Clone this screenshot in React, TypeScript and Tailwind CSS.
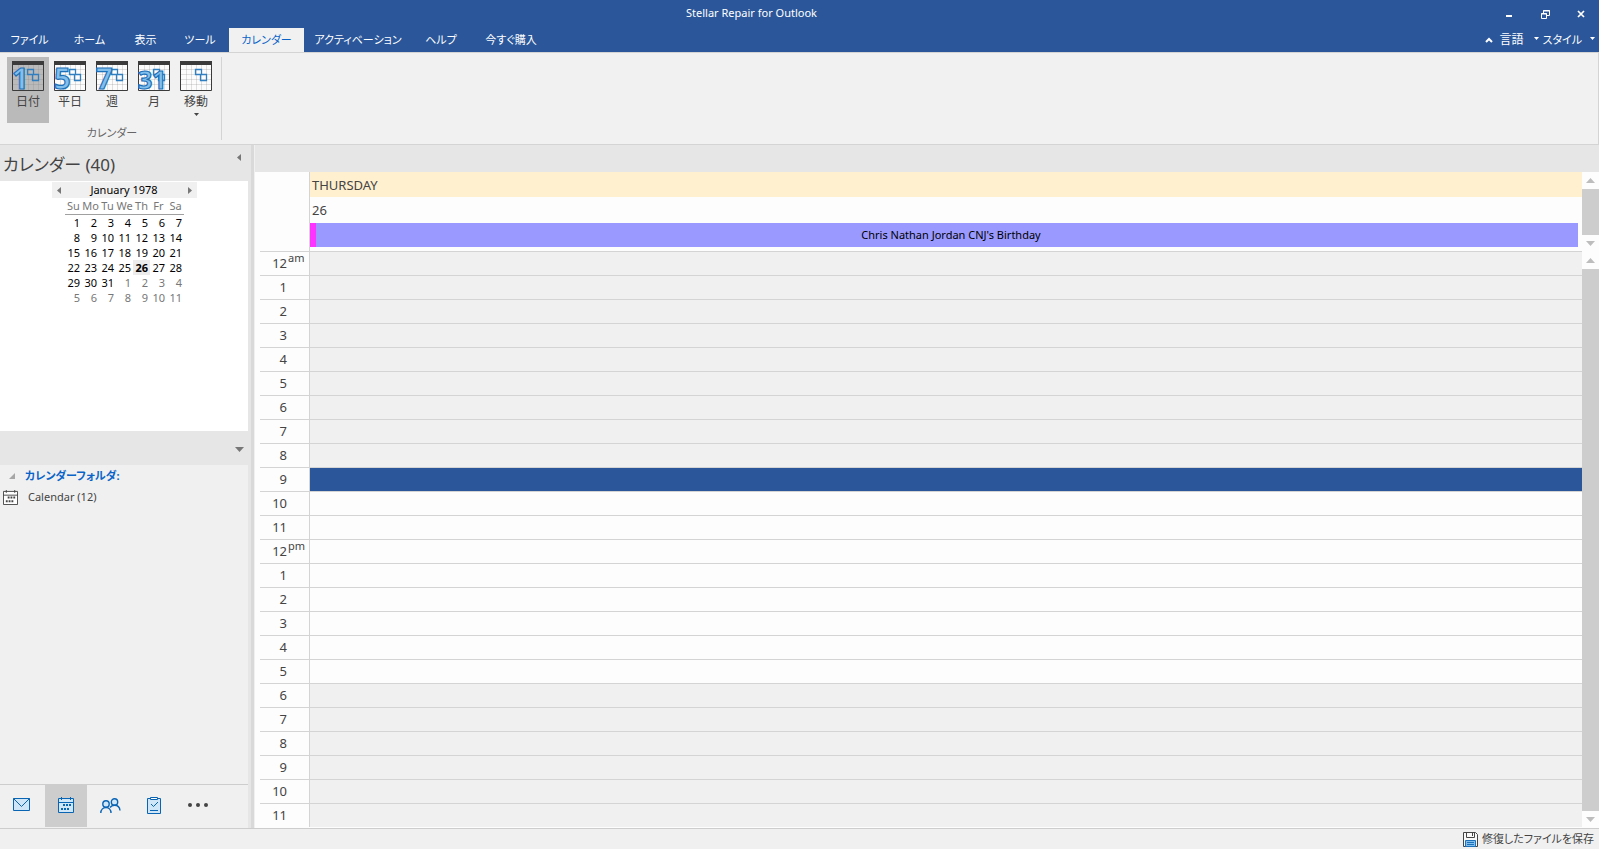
import type { ReactNode } from "react";

const tabs = [
  { label: "ファイル", width: "w-[59px]" },
  { label: "ホーム", width: "w-[61px]" },
  { label: "表示", width: "w-[51px]" },
  { label: "ツール", width: "w-[58px]" },
  { label: "カレンダー", width: "w-[75px]", active: true },
  { label: "アクティベーション", width: "w-[108px]" },
  { label: "ヘルプ", width: "w-[58px]" },
  { label: "今すぐ購入", width: "w-[82px]" },
];

const views = [
  { label: "日付", digits: "1", active: true },
  { label: "平日", digits: "5" },
  { label: "週", digits: "7" },
  { label: "月", digits: "31" },
  { label: "移動", digits: "", menu: true },
];

const weekdays = ["Su", "Mo", "Tu", "We", "Th", "Fr", "Sa"];
const weeks = [
  [1, 2, 3, 4, 5, 6, 7],
  [8, 9, 10, 11, 12, 13, 14],
  [15, 16, 17, 18, 19, 20, 21],
  [22, 23, 24, 25, 26, 27, 28],
  [29, 30, 31, 1, 2, 3, 4],
  [5, 6, 7, 8, 9, 10, 11],
];

const hours = Array.from({ length: 24 }, (_, hour) => ({
  hour,
  label: hour % 12 === 0 ? 12 : hour % 12,
  suffix: hour === 0 ? "am" : hour === 12 ? "pm" : "",
}));

function Triangle({ dir, className }: { dir: "up" | "down" | "left" | "right"; className: string }) {
  const points = {
    up: "0,10 5,0 10,10",
    down: "0,0 10,0 5,10",
    left: "10,0 10,10 0,5",
    right: "0,0 10,5 0,10",
  };
  return (
    <svg viewBox="0 0 10 10" preserveAspectRatio="none" className={className} fill="currentColor" aria-hidden="true">
      <polygon points={points[dir]} />
    </svg>
  );
}

function ViewIcon({ digits }: { digits: string }) {
  return (
    <svg width="32" height="30" viewBox="0 0 32 30" className="shrink-0 overflow-visible" aria-hidden="true">
      <rect x="1" y="4" width="30" height="25" fill="#fff" fillOpacity={digits === "1" ? 0 : 0.8} />
      <path d="M6.5 4v25M11.5 4v25M16.5 4v25M21.5 4v25M26.5 4v25M1 8.5h30M1 13.5h30M1 18.5h30M1 23.5h30" stroke="#888" strokeOpacity="0.25" />
      <path d="M15.5 8.5h6v5h-6zM20.5 13.5h6v6h-6z" fill="none" stroke="#2f7fc1" strokeWidth="1.3" />
      <path d="M.5 0v29.5h31V0" fill="none" stroke="#3b3b3b" />
      <rect width="32" height="4" fill="#3b3b3b" />
      <text
        x="0"
        y="28"
        fontSize={digits === "31" ? 25 : 29}
        fontWeight="700"
        fontFamily="Noto Sans, sans-serif"
        fill="#83bfec"
        stroke="#1d71b8"
        strokeWidth="1.2"
      >
        {digits}
      </text>
    </svg>
  );
}

function CalendarGlyph({ stroke, fill, className }: { stroke: string; fill: string; className: string }) {
  return (
    <svg viewBox="0 0 16 16" className={className} aria-hidden="true">
      <path d="M.5 1.5h15v14H.5z" fill={fill} stroke={stroke} />
      <path d="M.5 5.5h15M3.5 0v3M12.500 0v3" stroke={stroke} />
      <path d="M5 7h2v2H5zM8 7h2v2H8zM11 7h2v2h-2zM3 11h2v2H3zM6 11h2v2H6zM9 11h2v2H9z" fill={stroke} />
    </svg>
  );
}

function TitleBar() {
  return (
    <header className="bg-[#2b579a] text-white">
      <div className="flex h-7 items-center">
        <div className="w-3" />
        <h1 className="flex-1 pb-[2px] text-center text-[11px] leading-6 font-normal">Stellar Repair for Outlook</h1>
        <div className="flex h-6">
          <button type="button" aria-label="Minimize" className="flex w-9 items-center justify-center">
            <svg width="8" height="8"><path d="M1 6h6" stroke="#fff" strokeWidth="2" /></svg>
          </button>
          <button type="button" aria-label="Restore" className="flex w-9 items-center justify-center">
            <svg width="9" height="9" fill="none" stroke="#fff">
              <path d="M2.5 3V.5h6v5H6M2 1h7M0 4h6" />
              <path d="M.5 3.5h5v5h-5z" />
            </svg>
          </button>
          <button type="button" aria-label="Close" className="flex w-9 items-center justify-center">
            <svg width="8" height="8"><path d="M1 1l6 6M7 1L1 7" stroke="#fff" strokeWidth="1.7" /></svg>
          </button>
        </div>
      </div>
      <div className="flex h-6 items-stretch text-[11px]">
        <nav className="flex">
          {tabs.map((tab) => (
            <button
              key={tab.label}
              type="button"
              className={`${tab.width} flex items-center justify-center whitespace-nowrap ${tab.active ? "bg-[#f1f1f1] text-[#0a64c8]" : ""}`}
            >
              {tab.label}
            </button>
          ))}
        </nav>
        <div className="ml-auto flex items-center">
          <button type="button" aria-label="Collapse ribbon" className="px-[6px]">
            <svg width="8" height="6"><path d="M1 5l3-3 3 3" fill="none" stroke="#fff" strokeWidth="2" /></svg>
          </button>
          <button type="button" className="flex items-center text-xs">
            言語 <Triangle dir="down" className="mb-1 ml-[10px] h-[3px] w-[5px]" />
          </button>
          <button type="button" className="ml-1 flex items-center pr-1">
            スタイル <Triangle dir="down" className="mb-1 ml-2 h-[3px] w-[5px]" />
          </button>
        </div>
      </div>
    </header>
  );
}

function Ribbon() {
  return (
    <section className="flex h-[93px] border-y border-r border-[#d4d4d4] bg-[#f1f1f1] py-1 text-xs text-[#444]">
      <div className="flex flex-col border-r border-[#d4d4d4] pr-1 pl-[7px]">
        <div className="flex">
          {views.map((view) => (
            <button
              key={view.label}
              type="button"
              className={`flex h-[66px] w-[42px] flex-col items-center pt-1 ${view.active ? "bg-[#bababa]" : ""}`}
            >
              <ViewIcon digits={view.digits} />
              <span className="mt-[3px] leading-4">{view.label}</span>
              {view.menu && <Triangle dir="down" className="mt-[3px] h-[3px] w-[5px]" />}
            </button>
          ))}
        </div>
        <div className="text-center text-[11px] leading-5 text-[#666]">カレンダー</div>
      </div>
    </section>
  );
}

function MiniCalendar() {
  return (
    <div className="h-[250px] bg-white pt-px">
      <div className="mx-auto flex h-4 w-[145px] items-center justify-between bg-[#f0f0f0] px-[5px] text-[#777]">
        <button type="button" aria-label="Previous month">
          <Triangle dir="left" className="h-[7px] w-1" />
        </button>
        <span className="text-[11px] text-black">January 1978</span>
        <button type="button" aria-label="Next month">
          <Triangle dir="right" className="h-[7px] w-1" />
        </button>
      </div>
      <table className="ml-[65px] w-[119px] table-fixed border-collapse text-[11px] text-black">
        <thead>
          <tr className="h-4 border-b border-[#a0a0a0] text-[#777]">
            {weekdays.map((day) => (
              <th key={day} className="p-0 text-center leading-[15px] font-normal">
                {day}
              </th>
            ))}
          </tr>
        </thead>
        <tbody>
          {weeks.map((week, row) => (
            <tr key={row}>
              {week.map((day) => {
                const nextMonth = row > 3 && day < 15;
                const selected = day === 26;
                return (
                  <td
                    key={day}
                    className={`p-0 pr-[2px] text-right leading-[15px] ${nextMonth ? "text-[#777]" : ""} ${selected ? "bg-[#ececec] font-bold" : ""}`}
                  >
                    {day}
                  </td>
                );
              })}
            </tr>
          ))}
        </tbody>
      </table>
    </div>
  );
}

function NavButton({ label, active, children }: { label: string; active?: boolean; children: ReactNode }) {
  return (
    <button
      type="button"
      aria-label={label}
      className={`flex h-[42px] w-[42px] items-center justify-center pb-[2px] ${active ? "bg-[#cdcdcd]" : ""}`}
    >
      {children}
    </button>
  );
}

function Sidebar() {
  return (
    <aside className="flex w-[248px] shrink-0 flex-col bg-[#f0f0f0]">
      <div className="flex h-9 items-start justify-between bg-[#e6e6e6] pl-[3px]">
        <h2 className="text-[17px] leading-10 text-[#444]">カレンダー (40)</h2>
        <button type="button" aria-label="Collapse pane" className="mt-[9px] mr-[7px] text-[#777]">
          <Triangle dir="left" className="h-[7px] w-1" />
        </button>
      </div>
      <MiniCalendar />
      <div className="flex h-[34px] items-center justify-end bg-[#e6e6e6] pt-[2px] pr-1 text-[#777]">
        <Triangle dir="down" className="h-[5px] w-[9px]" />
      </div>
      <div className="flex-1 text-[11px]">
        <div className="flex h-[22px] items-center font-bold text-[#0a64c8]">
          <svg width="6" height="6" className="mr-[10px] ml-[9px]"><path d="M6 0v6H0z" fill="#a6a6a6" /></svg>
          カレンダーフォルダ:
        </div>
        <a href="#calendar" className="flex h-5 items-center gap-[10px] pl-[3px] text-[#444]">
          <CalendarGlyph stroke="#444" fill="#fff" className="size-[15px]" />
          Calendar (12)
        </a>
      </div>
      <nav className="flex h-11 gap-[2px] border-t border-[#cdcdcd] pl-px">
        <NavButton label="Mail">
          <svg width="18" height="14" fill="#cfe5f8" stroke="#0a64b4">
            <path d="M.5.5h16v12H.5z" />
            <path d="M.5.5l8 8 8-8" fill="none" />
          </svg>
        </NavButton>
        <NavButton label="Calendar" active>
          <CalendarGlyph stroke="#0a64b4" fill="#cfe5f8" className="size-4" />
        </NavButton>
        <NavButton label="People">
          <svg width="21" height="15" fill="none" stroke="#0a64b4" strokeWidth="1.4">
            <circle cx="6" cy="6" r="3.2" fill="#cfe5f8" />
            <circle cx="14.5" cy="4" r="3.2" fill="#cfe5f8" />
            <path d="M.8 15c0-3.500 2.500-5.500 5.200-5.500s5 2 5 5.500M10 9.500c1-1.500 2.500-2.200 4.500-2.200 3 0 5.200 2 5.500 5.200" />
          </svg>
        </NavButton>
        <NavButton label="Tasks">
          <svg width="15" height="17" fill="none" stroke="#0a64b4">
            <path d="M.5 1.500h13v15H.5z" fill="#cfe5f8" />
            <path d="M3.500.5h7v2h-7z" fill="#fff" />
            <path d="M4 7l2.500 2.500L11 5M3 13.500h8" />
          </svg>
        </NavButton>
        <NavButton label="More">
          <svg width="20" height="4" fill="#444">
            <circle cx="2" cy="2" r="2" />
            <circle cx="10" cy="2" r="2" />
            <circle cx="18" cy="2" r="2" />
          </svg>
        </NavButton>
      </nav>
    </aside>
  );
}

function ScrollBar({ className }: { className: string }) {
  return (
    <div className={`flex w-[17px] shrink-0 flex-col bg-[#fdfdfd] text-[#bdbdbd] ${className}`}>
      <button type="button" aria-label="Scroll up" className="flex h-[17px] items-center justify-center">
        <Triangle dir="up" className="h-[5px] w-[9px]" />
      </button>
      <div className="flex-1 bg-[#cdcdcd]" />
      <button type="button" aria-label="Scroll down" className="flex h-[17px] items-center justify-center">
        <Triangle dir="down" className="h-[5px] w-[9px]" />
      </button>
    </div>
  );
}

function slotColor(hour: number) {
  if (hour === 9) return "bg-[#2b579a]";
  return hour > 9 && hour < 18 ? "bg-[#fdfdfd]" : "bg-[#f0f0f0]";
}

function DayView() {
  return (
    <main className="flex min-w-0 flex-1 flex-col bg-[#fdfdfd]">
      <div className="h-[27px] bg-[#e6e6e6]" />
      <div className="flex">
        <div className="ml-[5px] flex h-[79px] min-w-0 flex-1">
          <div className="w-[50px] border-r border-[#d4d4d4]" />
          <div className="flex-1 text-[13px] text-[#444]">
            <div className="h-[25px] bg-[#fff0d0] pl-[2px] leading-[26px]">THURSDAY</div>
            <div className="h-[26px] pl-[2px] leading-[26px]">26</div>
            <div className="mr-1 h-6 border-l-[6px] border-[#ff33ff] bg-[#9999ff] pl-2 text-center text-[11px] leading-6 text-black">
              Chris Nathan Jordan CNJ's Birthday
            </div>
          </div>
        </div>
        <ScrollBar className="h-20" />
      </div>
      <div className="-mt-px flex flex-1">
        <div className="ml-[5px] min-w-0 flex-1">
          {hours.map(({ hour, label, suffix }) => (
            <div key={hour} className="flex h-6 border-t border-[#d4d4d4] text-[13px] text-[#444]">
              <div className="flex w-[50px] border-r border-[#d4d4d4]">
                <span className="w-[27px] text-right leading-[22px]">{label}</span>
                {suffix && <span className="pl-px text-[11px] leading-3">{suffix}</span>}
              </div>
              <div className={`flex-1 ${slotColor(hour)}`} />
            </div>
          ))}
        </div>
        <ScrollBar className="pt-px" />
      </div>
    </main>
  );
}

export default function App() {
  return (
    <div className="flex min-h-screen flex-col bg-[#f0f0f0] font-['Noto_Sans','Noto_Sans_CJK_JP',sans-serif] [font-feature-settings:'palt']">
      <TitleBar />
      <Ribbon />
      <div className="flex flex-1">
        <Sidebar />
        <div className="w-[7px] shrink-0 border-r border-l-[3px] border-r-[#f0f0f0] border-l-[#e6e6e6] bg-[#d9d9d9]" />
        <DayView />
      </div>
      <footer className="flex h-[21px] items-center justify-end border-t border-[#cdcdcd] pr-[5px] text-[11px] text-[#444]">
        <button type="button" className="flex items-center gap-1">
          <svg width="15" height="15" aria-hidden="true">
            <path d="M.5.5h12l2 2v12H.5z" fill="#f8f8f8" stroke="#444" />
            <path d="M3.500.5v5h8v-5M9.500 1v3" fill="none" stroke="#444" />
            <path d="M2.500 8.500h10v6h-10z" fill="#83bfec" stroke="#1d71b8" />
            <path d="M4 10.500h7M4 12.500h7" stroke="#1d71b8" />
          </svg>
          修復したファイルを保存
        </button>
      </footer>
    </div>
  );
}
